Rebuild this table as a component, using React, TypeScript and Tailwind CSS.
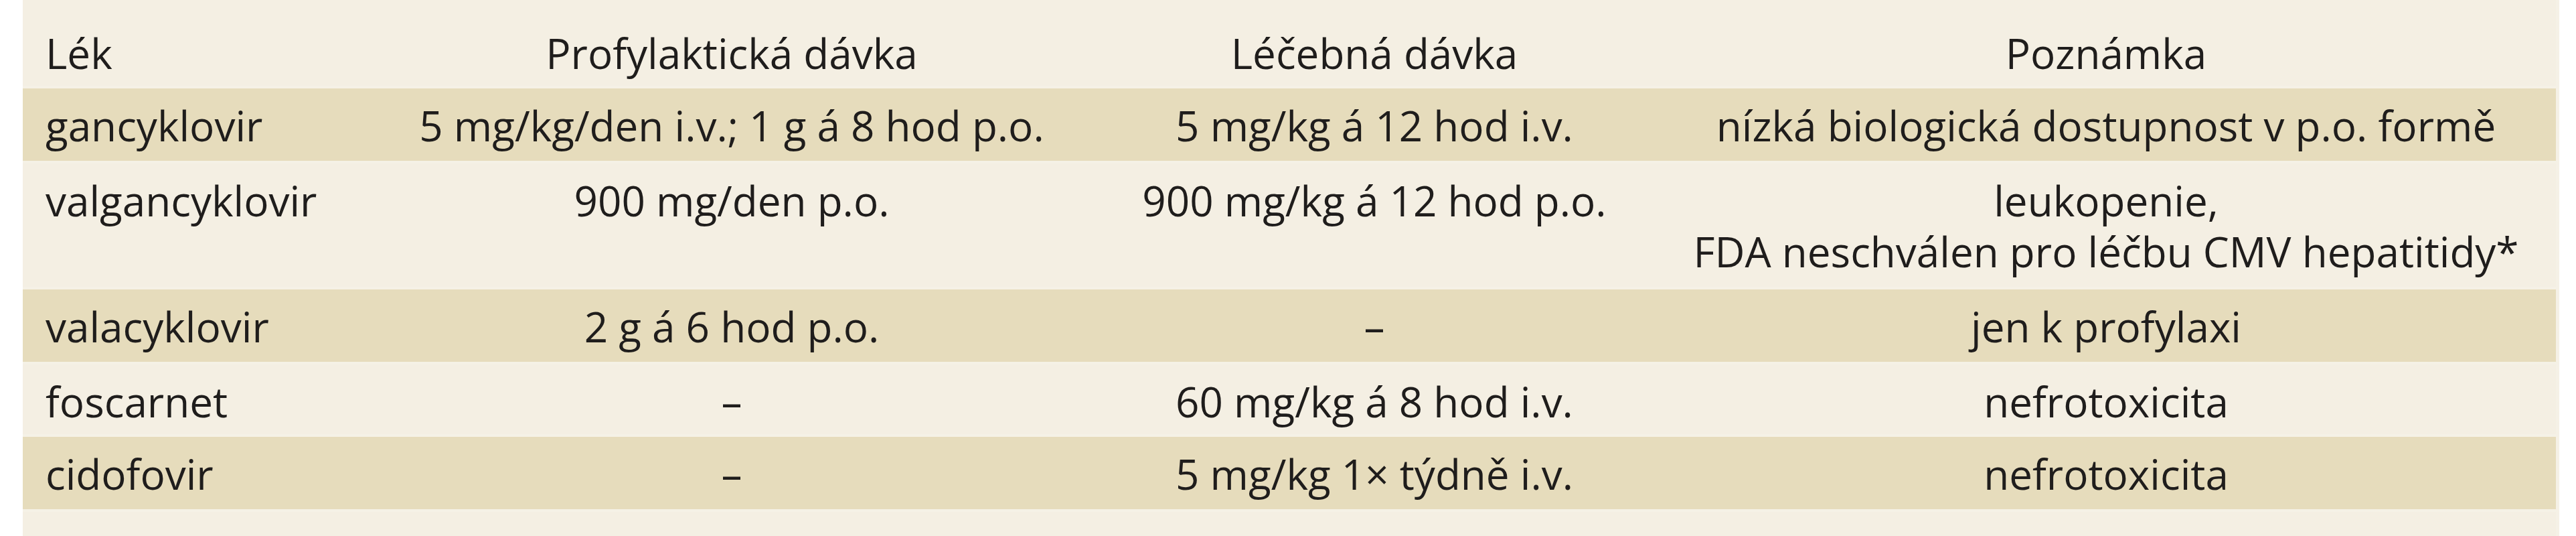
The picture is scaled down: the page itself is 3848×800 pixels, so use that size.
const rows = [
  {
    drug: "gancyklovir",
    prophylaxis: "5 mg/kg/den i.v.; 1 g á 8 hod p.o.",
    therapy: "5 mg/kg á 12 hod i.v.",
    note: ["nízká biologická dostupnost v p.o. formě"],
    dark: true,
    h: "h-[108px]",
  },
  {
    drug: "valgancyklovir",
    prophylaxis: "900 mg/den p.o.",
    therapy: "900 mg/kg á 12 hod p.o.",
    note: ["leukopenie,", "FDA neschválen pro léčbu CMV hepatitidy*"],
    dark: false,
    h: "h-[184px]",
  },
  {
    drug: "valacyklovir",
    prophylaxis: "2 g á 6 hod p.o.",
    therapy: "–",
    note: ["jen k profylaxi"],
    dark: true,
    h: "h-[108px]",
  },
  {
    drug: "foscarnet",
    prophylaxis: "–",
    therapy: "60 mg/kg á 8 hod i.v.",
    note: ["nefrotoxicita"],
    dark: false,
    h: "h-[104px]",
  },
  {
    drug: "cidofovir",
    prophylaxis: "–",
    therapy: "5 mg/kg 1× týdně i.v.",
    note: ["nefrotoxicita"],
    dark: true,
    h: "h-[108px]",
  },
];

const grid = "grid grid-cols-[520px_1078px_842px_1344px]";

export default function App() {
  return (
    <div className="w-[3848px] h-[800px] bg-white overflow-hidden font-['Open_Sans',sans-serif] text-[62px] leading-[76px] text-[#1f1d1c]">
      <div className="ml-[34px] w-[3789px] h-[800px] bg-[#f5f1e6] pr-[5px] flex flex-col gap-[4px]">
        <div className={`${grid} h-[128px] pt-[41px] bg-[#f4efe3]`}>
          <div className="pl-[34px]">Lék</div>
          <div className="text-center">Profylaktická dávka</div>
          <div className="text-center">Léčebná dávka</div>
          <div className="text-center">Poznámka</div>
        </div>
        {rows.map((r) => (
          <div
            key={r.drug}
            className={`${grid} ${r.h} pt-[17px] ${r.dark ? "bg-[#e6dcbc]" : "bg-[#f4efe3]"}`}
          >
            <div className="pl-[34px]">{r.drug}</div>
            <div className="text-center">{r.prophylaxis}</div>
            <div className="text-center">{r.therapy}</div>
            <div className="text-center">
              {r.note.map((line) => (
                <div key={line}>{line}</div>
              ))}
            </div>
          </div>
        ))}
        <div className="flex-1 bg-[#f4efe3]" />
      </div>
    </div>
  );
}
